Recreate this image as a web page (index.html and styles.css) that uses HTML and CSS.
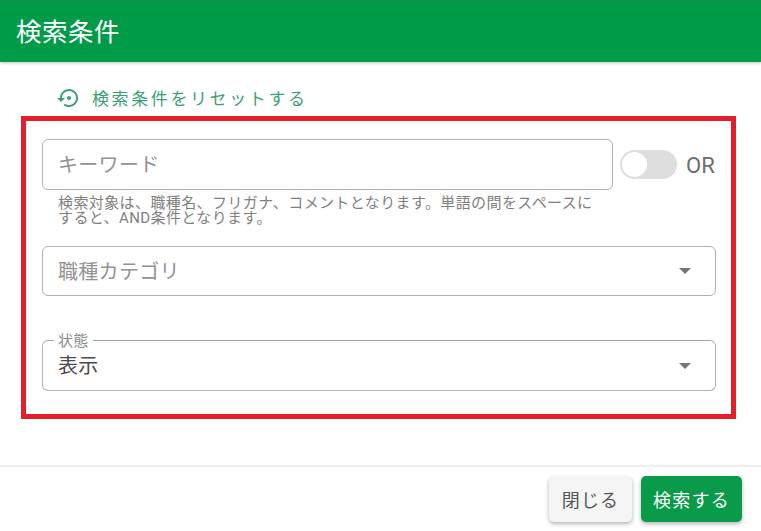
FILE: index.html
```html
<!DOCTYPE html>
<html lang="ja">
<head>
<meta charset="utf-8">
<title>検索条件</title>
<link rel="stylesheet" href="styles.css">
</head>
<body>
<div class="dialog">
  <header class="head">検索条件</header>
  <main class="body">
    <a class="reset">
      <svg class="reset-icon" width="24" height="24" viewBox="0 0 24 24"><path fill="currentColor" d="M14 12c0-1.100-.9-2-2-2s-2 .9-2 2 .9 2 2 2 2-.9 2-2zm-2-9c-4.970 0-9 4.030-9 9H0l4 4 4-4H5c0-3.870 3.130-7 7-7s7 3.130 7 7-3.130 7-7 7c-1.510 0-2.910-.49-4.060-1.300l-1.420 1.440C8.040 20.300 9.940 21 12 21c4.970 0 9-4.030 9-9s-4.030-9-9-9z"/></svg>
      <span class="reset-label">検索条件をリセットする</span>
    </a>
    <section class="frame">
      <div class="keyword-row">
        <div class="field keyword"><span class="placeholder">キーワード</span></div>
        <div class="switch"><span class="knob"></span></div>
        <span class="or">OR</span>
      </div>
      <p class="hint">検索対象は、職種名、フリガナ、コメントとなります。単語の間をスペースにすると、AND条件となります。</p>
      <div class="field select category">
        <span class="placeholder">職種カテゴリ</span>
        <span class="caret"></span>
      </div>
      <div class="field select status">
        <span class="legend">状態</span>
        <span class="value">表示</span>
        <span class="caret"></span>
      </div>
    </section>
  </main>
  <footer class="foot">
    <button class="btn close">閉じる</button>
    <button class="btn search">検索する</button>
  </footer>
</div>
</body>
</html>
```
FILE: styles.css
```css
* { box-sizing: border-box; }
html, body { margin: 0; padding: 0; }
body {
  width: 761px;
  height: 531px;
  overflow: hidden;
  background: #fff;
  font-family: Roboto, "Noto Sans CJK JP", sans-serif;
  color: #555;
}
.dialog { display: flex; flex-direction: column; height: 531px; }
.head {
  height: 62px;
  flex: none;
  display: flex;
  align-items: center;
  padding: 0 0 4px 16px;
  background: #009b48;
  border-top: 1px solid #1f8a58;
  color: #fff;
  font-size: 25.5px;
  letter-spacing: .5px;
  box-shadow: 0 1px 3px rgba(0, 0, 0, .25);
}
.body { flex: 1; padding: 24px 25px 0 21px; }
.reset {
  display: flex;
  align-items: center;
  gap: 11px;
  height: 24px;
  margin-left: 36px;
  color: #3d9f74;
  font-size: 17px;
  letter-spacing: 2.6px;
}
.reset-label { padding-bottom: 2px; }
.reset-icon { flex: none; width: 24px; height: 24px; }
.frame {
  width: 715px;
  height: 303px;
  margin-top: 6px;
  padding: 18px 15px 0 16px;
  border: 5px solid #e61e2a;
}
.keyword-row { display: flex; align-items: center; }
.field {
  position: relative;
  display: flex;
  align-items: center;
  height: 51px;
  padding: 0 15px 3px;
  border: 1px solid #b0b0b0;
  border-radius: 6px;
  font-size: 20px;
  letter-spacing: .3px;
}
.select { height: 50px; padding-bottom: 2px; }
.keyword { width: 571px; flex: none; }
.placeholder { color: #929292; }
.switch {
  position: relative;
  flex: none;
  width: 57px;
  height: 29px;
  margin: 0 9px 0 7px;
  border-radius: 15px;
  background: #dedede;
}
.knob {
  position: absolute;
  left: 2px;
  top: 2px;
  width: 25px;
  height: 25px;
  border-radius: 50%;
  background: #fff;
}
.or { font-size: 22px; line-height: 26px; padding-top: 3px; color: #6c6c6c; }
.hint {
  width: 540px;
  margin: 6px 0 0 16px;
  font-size: 15px;
  letter-spacing: .4px;
  line-height: 15px;
  color: #808080;
}
.category { margin-top: 20px; }
.status { margin-top: 44px; height: 51px; border-top-color: #a6a6a6; }
.value { color: #4a4a4a; }
.legend {
  position: absolute;
  left: 11px;
  top: -9px;
  padding: 0 4px;
  background: #fff;
  font-size: 15px;
  line-height: 18px;
  color: #8a8a8a;
}
.caret {
  position: absolute;
  right: 24px;
  top: 50%;
  margin-top: -3px;
  border-left: 6px solid transparent;
  border-right: 6px solid transparent;
  border-top: 6px solid #757575;
}
.foot {
  flex: none;
  height: 66px;
  display: flex;
  justify-content: flex-end;
  gap: 9px;
  padding: 9px 19px 0 0;
  border-top: 2px solid #eee;
}
.btn {
  height: 46px;
  padding: 0;
  border: 0;
  border-radius: 5px;
  font-family: inherit;
  font-size: 18px;
  letter-spacing: 1.2px;
  box-shadow: 0 2px 4px rgba(0, 0, 0, .3);
}
.close { width: 83px; background: #f5f5f5; color: #555; }
.search { width: 101px; background: #0a9b4a; color: #fff; }
```
